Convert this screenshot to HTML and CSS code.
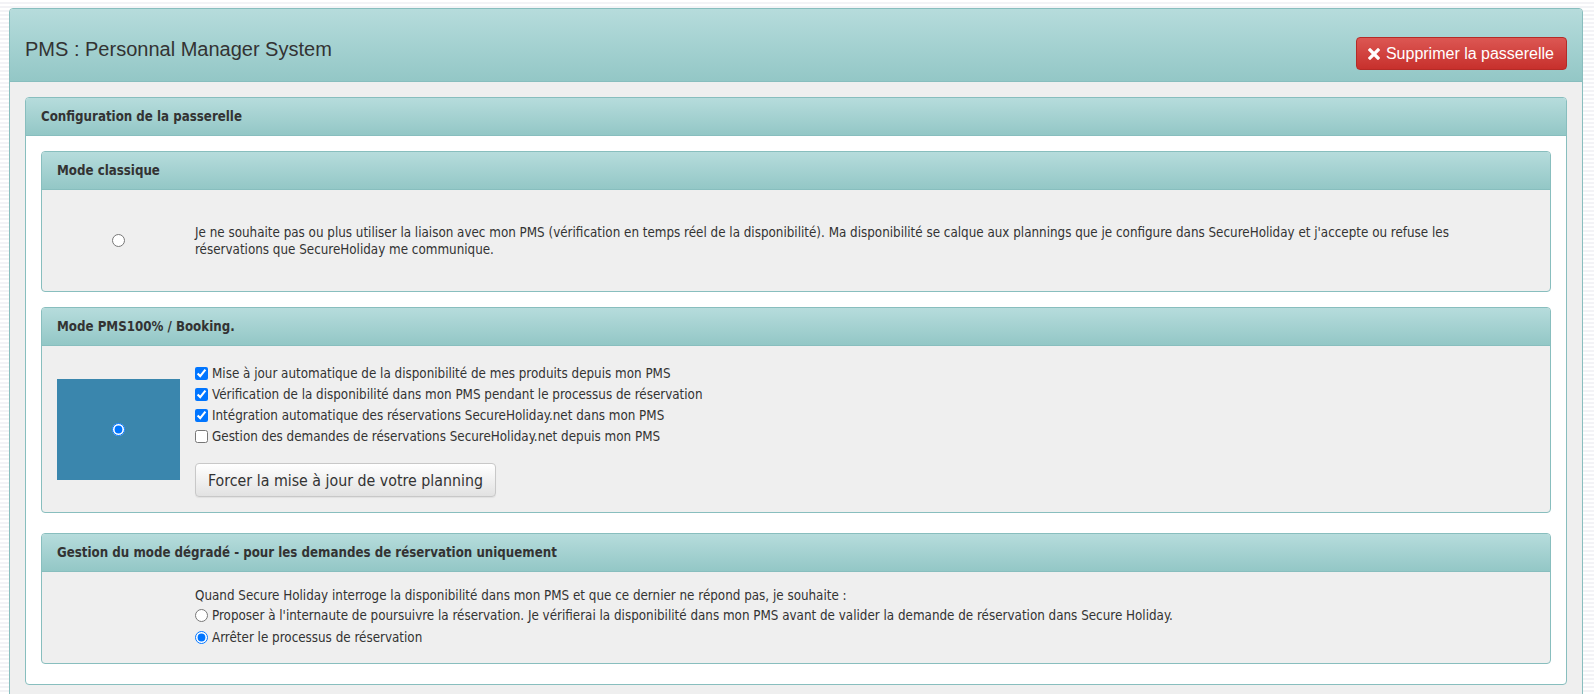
FILE: index.html
```html
<!DOCTYPE html>
<html lang="fr">
<head>
<meta charset="utf-8">
<title>PMS : Personnal Manager System</title>
<link rel="stylesheet" href="styles.css">
</head>
<body>
<div class="panel panel-main">
  <div class="panel-head main-head">
    <h1 class="main-title">PMS : Personnal Manager System</h1>
    <button class="btn btn-danger" type="button">
      <svg class="btn-icon" viewBox="0 0 12 12" width="12" height="12" aria-hidden="true">
        <path d="M2 2 L10 10 M10 2 L2 10" stroke="#fff" stroke-width="3.2" stroke-linecap="square"/>
      </svg>
      Supprimer la passerelle
    </button>
  </div>
  <div class="main-body">
    <div class="panel panel-config">
      <div class="panel-head section-head">Configuration de la passerelle</div>
      <div class="config-body">

        <div class="panel sub sub-classic">
          <div class="panel-head section-head">Mode classique</div>
          <div class="sub-body">
            <div class="mode-row row-classic">
              <div class="mode-cell"><input type="radio" name="mode"></div>
              <p class="mode-text">Je ne souhaite pas ou plus utiliser la liaison avec mon PMS (vérification en temps réel de la disponibilité). Ma disponibilité se calque aux plannings que je configure dans SecureHoliday et j'accepte ou refuse les<br>réservations que SecureHoliday me communique.</p>
            </div>
          </div>
        </div>

        <div class="panel sub">
          <div class="panel-head section-head">Mode PMS100% / Booking.</div>
          <div class="sub-body">
            <div class="mode-row">
              <div class="mode-cell mode-cell-active"><input type="radio" name="mode" checked></div>
              <div class="mode-options options-pms">
                <label class="opt"><input type="checkbox" checked> Mise à jour automatique de la disponibilité de mes produits depuis mon PMS</label>
                <label class="opt"><input type="checkbox" checked> Vérification de la disponibilité dans mon PMS pendant le processus de réservation</label>
                <label class="opt"><input type="checkbox" checked> Intégration automatique des réservations SecureHoliday.net dans mon PMS</label>
                <label class="opt"><input type="checkbox"> Gestion des demandes de réservations SecureHoliday.net depuis mon PMS</label>
                <button class="btn btn-default" type="button">Forcer la mise à jour de votre planning</button>
              </div>
            </div>
          </div>
        </div>

        <div class="panel sub">
          <div class="panel-head section-head">Gestion du mode dégradé - pour les demandes de réservation uniquement</div>
          <div class="sub-body">
            <div class="mode-row">
              <div class="mode-spacer"></div>
              <div class="mode-options">
                <p class="intro">Quand Secure Holiday interroge la disponibilité dans mon PMS et que ce dernier ne répond pas, je souhaite :</p>
                <label class="opt opt-radio"><input type="radio" name="degrade"> Proposer à l'internaute de poursuivre la réservation. Je vérifierai la disponibilité dans mon PMS avant de valider la demande de réservation dans Secure Holiday.</label>
                <label class="opt opt-radio"><input type="radio" name="degrade" checked> Arrêter le processus de réservation</label>
              </div>
            </div>
          </div>
        </div>

      </div>
    </div>
  </div>
</div>
</body>
</html>
```
FILE: styles.css
```css
html, body {
  margin: 0;
}

body {
  padding: 8px 11px 0 9px;
  background: repeating-linear-gradient(to bottom, #ffffff 0, #ffffff 2px, #f3f3f6 2px, #f3f3f6 4px);
  font-family: "DejaVu Sans Condensed", "DejaVu Sans", sans-serif;
  font-size: 13.3px;
  color: #333;
  height: 686px;
  overflow: hidden;
}

.panel {
  border: 1px solid #88bebe;
  border-radius: 4px;
}

.panel-head {
  background: linear-gradient(to bottom, #b6dcdc 0%, #93c7c6 100%);
  border-bottom: 1px solid #88bebe;
  border-radius: 3px 3px 0 0;
}

.panel-main {
  background: #efefef;
}

.main-head {
  display: flex;
  justify-content: space-between;
  align-items: flex-start;
  padding: 28px 15px 11px;
}

.main-title {
  margin: 0;
  font-family: "Liberation Sans", Arial, sans-serif;
  font-weight: normal;
  font-size: 20px;
  line-height: 24px;
  color: #333;
}

.main-body {
  padding: 15px 15px 20px;
}

.panel-config {
  background: #fff;
}

.section-head {
  padding: 10px 15px;
  font-weight: bold;
  font-size: 13.2px;
  line-height: 17px;
  color: #333;
}

.config-body {
  padding: 15px 15px 0;
}

.sub {
  background: #efefef;
  margin-bottom: 20px;
}

.sub-classic {
  margin-bottom: 15px;
}

.sub-body {
  padding: 15px;
}

.mode-row {
  display: grid;
  grid-template-columns: 123px 1fr;
  column-gap: 15px;
  align-items: center;
}

.row-classic {
  min-height: 71px;
}

.mode-cell {
  display: flex;
  align-items: center;
  justify-content: center;
  height: 71px;
}

.mode-cell-active {
  height: 101px;
  background: #3a86ad;
}

.mode-cell input {
  margin: 0;
  width: 13px;
  height: 13px;
}

.mode-text {
  margin: 0;
  line-height: 17px;
}

.mode-options {
  display: flex;
  flex-direction: column;
  align-items: flex-start;
}

.options-pms {
  padding-top: 2px;
}

.opt {
  display: flex;
  align-items: center;
  height: 21px;
  white-space: nowrap;
}

.opt input {
  margin: 0 4px 0 0;
  width: 13px;
  height: 13px;
}

.opt-radio {
  height: 22px;
}

.intro {
  margin: 0;
  line-height: 17px;
}

.btn {
  display: inline-flex;
  align-items: center;
  border-radius: 4px;
  cursor: pointer;
}

.btn-danger {
  height: 33px;
  padding: 0 12px 0 11px;
  gap: 6px;
  font-family: "Liberation Sans", Arial, sans-serif;
  font-size: 16px;
  color: #fff;
  background: linear-gradient(to bottom, #dc5753 0%, #c7302c 100%);
  border: 1px solid #b52b27;
}

.btn-icon {
  display: block;
}

.btn-default {
  margin-top: 16px;
  height: 34px;
  padding: 0 12px;
  font-family: "DejaVu Sans Condensed", "DejaVu Sans", sans-serif;
  font-size: 15.8px;
  color: #333;
  background: linear-gradient(to bottom, #ffffff 0%, #e2e2e2 100%);
  border: 1px solid #c8c8c8;
  box-shadow: 0 1px 1px rgba(0, 0, 0, 0.06);
}
```
